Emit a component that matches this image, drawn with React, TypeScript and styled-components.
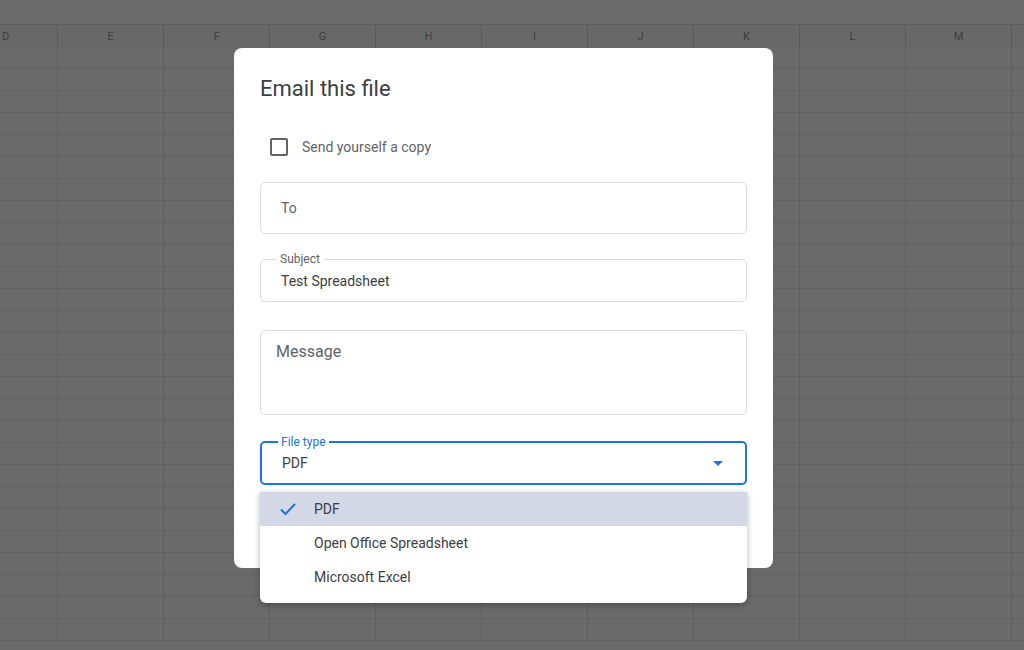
import React from 'react';
import styled, { createGlobalStyle } from 'styled-components';

const Global = createGlobalStyle`
  html, body { margin: 0; padding: 0; }
  body { font-family: Roboto, "Liberation Sans", sans-serif; background: #6a6a6a; overflow: hidden; }
`;

const Page = styled.div`
  position: relative;
  width: 1024px;
  height: 650px;
  overflow: hidden;
  background: #6a6a6a;
`;

const TopStrip = styled.div`
  height: 24px;
  background: #6b6b6b;
  border-bottom: 1px solid #5c5c5c;
`;

const Grid = styled.div`
  display: grid;
  grid-template-columns: 58px repeat(10, 106px);
  grid-auto-rows: 22px;
`;

const HeadCell = styled.div<{ $left?: boolean }>`
  height: 23px;
  border-right: 1px solid #5a5a5a;
  border-bottom: 2px solid #5a5a5a;
  background: #686868;
  color: #3e3e3e;
  font-size: 11px;
  display: flex;
  align-items: center;
  justify-content: ${p => (p.$left ? 'flex-start' : 'center')};
  padding-left: ${p => (p.$left ? 2 : 0)}px;
`;

const Cell = styled.div`
  border-right: 1px solid #5e5e5e;
  border-bottom: 1px solid #626262;
  background: #6a6a6a;
`;

const Dialog = styled.div`
  position: absolute;
  left: 234px;
  top: 48px;
  width: 539px;
  height: 520px;
  background: #fff;
  border-radius: 8px;
  box-sizing: border-box;
  padding: 26px 26px;
  display: flex;
  flex-direction: column;
`;

const Title = styled.div`
  font-size: 22px;
  color: #3c4043;
  line-height: 30px;
`;

const CheckRow = styled.label`
  display: flex;
  align-items: center;
  gap: 14px;
  margin: 34px 0 0 10px;
  font-size: 14px;
  color: #5f6368;
`;

const Box = styled.span`
  width: 14px;
  height: 14px;
  border: 2px solid #5f6368;
  border-radius: 2px;
`;

const Field = styled.div<{ $h: number; $top: number; $focus?: boolean }>`
  position: relative;
  margin-top: ${p => p.$top}px;
  height: ${p => p.$h}px;
  box-sizing: border-box;
  border: ${p => (p.$focus ? '2px solid #1a73e8' : '1px solid #dadce0')};
  border-radius: 5px;
  padding: 0 20px;
  display: flex;
  align-items: center;
  font-size: 14px;
  color: #3c4043;
`;

const Legend = styled.span<{ $focus?: boolean }>`
  position: absolute;
  left: 16px;
  top: -8px;
  padding: 0 3px;
  background: #fff;
  font-size: 12px;
  color: ${p => (p.$focus ? '#1a73e8' : '#5f6368')};
`;

const Placeholder = styled.span<{ $big?: boolean }>`
  color: #5f6368;
  font-size: ${p => (p.$big ? 16 : 14)}px;
  align-self: ${p => (p.$big ? 'flex-start' : 'center')};
  margin-top: ${p => (p.$big ? 11 : 0)}px;
  margin-left: ${p => (p.$big ? -5 : 0)}px;
`;

const Arrow = styled.span`
  margin-left: auto;
  width: 0;
  height: 0;
  border-left: 5px solid transparent;
  border-right: 5px solid transparent;
  border-top: 5px solid #1a73e8;
  margin-right: 2px;
`;

const Menu = styled.div`
  position: absolute;
  left: 260px;
  top: 492px;
  width: 487px;
  padding-bottom: 9px;
  background: #fff;
  border-radius: 0 0 6px 6px;
  box-shadow: 0 2px 6px rgba(0, 0, 0, 0.3);
`;

const Item = styled.div<{ $sel?: boolean }>`
  height: 34px;
  display: flex;
  align-items: center;
  padding-left: 54px;
  position: relative;
  font-size: 14px;
  color: #3c4043;
  background: ${p => (p.$sel ? '#d3d9e6' : '#fff')};
`;

const Check = styled.svg`
  position: absolute;
  left: 19px;
  top: 9px;
`;

const cols = ['D', 'E', 'F', 'G', 'H', 'I', 'J', 'K', 'L', 'M', ''];

export default function App() {
  return (
    <Page>
      <Global />
      <TopStrip />
      <Grid>
        {cols.map((c, i) => (
          <HeadCell key={i} $left={i === 0}>{c}</HeadCell>
        ))}
        {Array.from({ length: 27 * cols.length }).map((_, i) => (
          <Cell key={i} />
        ))}
      </Grid>
      <Dialog>
        <Title>Email this file</Title>
        <CheckRow>
          <Box />
          Send yourself a copy
        </CheckRow>
        <Field $h={52} $top={26}>
          <Placeholder>To</Placeholder>
        </Field>
        <Field $h={43} $top={25}>
          <Legend>Subject</Legend>
          Test Spreadsheet
        </Field>
        <Field $h={85} $top={28}>
          <Placeholder $big>Message</Placeholder>
        </Field>
        <Field $h={44} $top={26} $focus>
          <Legend $focus>File type</Legend>
          PDF
          <Arrow />
        </Field>
      </Dialog>
      <Menu>
        <Item $sel>
          <Check width="18" height="16" viewBox="0 0 18 16">
            <path d="M2 8.5 L6.5 13 L16 3" fill="none" stroke="#1a73e8" strokeWidth="2" />
          </Check>
          PDF
        </Item>
        <Item>Open Office Spreadsheet</Item>
        <Item>Microsoft Excel</Item>
      </Menu>
    </Page>
  );
}
